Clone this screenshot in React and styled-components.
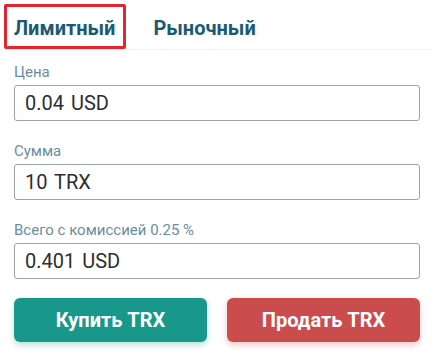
import React, { useState } from 'react';
import styled, { createGlobalStyle } from 'styled-components';

const GlobalStyle = createGlobalStyle`
  body {
    margin: 0;
    background: #fff;
    font-family: Roboto, "Liberation Sans", sans-serif;
  }
`;

const Panel = styled.div`
  width: 432px;
  height: 355px;
  box-sizing: border-box;
  overflow: hidden;
`;

const TabBar = styled.div`
  display: flex;
  align-items: stretch;
  height: 50px;
  padding: 4px 0 0 4px;
  box-sizing: border-box;
  border-bottom: 1px solid #eef1f3;
`;

const Tab = styled.button`
  display: flex;
  align-items: center;
  padding: 3px 8px 0 7px;
  margin-right: 17px;
  background: none;
  border: 3px solid ${(p) => (p.$active ? '#e3262d' : 'transparent')};
  border-radius: 2px;
  font-family: inherit;
  font-size: 20px;
  font-weight: 700;
  color: #1c5a72;
  cursor: pointer;
`;

const Form = styled.div`
  display: flex;
  flex-direction: column;
  gap: 21px;
  padding: 13px 12px 0 14px;
`;

const Field = styled.label`
  display: flex;
  flex-direction: column;
  gap: 4px;
`;

const Label = styled.span`
  font-size: 15px;
  line-height: 18px;
  color: #6b8e9b;
`;

const Input = styled.input`
  height: 36px;
  box-sizing: border-box;
  padding: 0 10px;
  border: 1px solid #9aa5a9;
  border-radius: 3px;
  font-family: inherit;
  font-size: 20px;
  word-spacing: 2px;
  color: #2e2e2e;
  outline: none;
`;

const Actions = styled.div`
  display: flex;
  gap: 20px;
  margin-top: -2px;
`;

const ActionButton = styled.button`
  flex: 1;
  height: 44px;
  border: none;
  border-radius: 6px;
  background: ${(p) => (p.$variant === 'sell' ? '#cb4c4c' : '#17988a')};
  box-shadow: 0 3px 6px ${(p) => (p.$variant === 'sell' ? 'rgba(203,76,76,0.3)' : 'rgba(23,152,138,0.3)')};
  color: #fff;
  font-family: inherit;
  font-size: 20px;
  font-weight: 700;
  cursor: pointer;
`;

const App = () => {
  const [tab, setTab] = useState('limit');
  const [price, setPrice] = useState('0.04 USD');
  const [amount, setAmount] = useState('10 TRX');
  const [total, setTotal] = useState('0.401 USD');

  return (
    <Panel>
      <GlobalStyle />
      <TabBar>
        <Tab $active={tab === 'limit'} onClick={() => setTab('limit')}>Лимитный</Tab>
        <Tab $active={tab === 'market'} onClick={() => setTab('market')}>Рыночный</Tab>
      </TabBar>
      <Form>
        <Field>
          <Label>Цена</Label>
          <Input value={price} onChange={(e) => setPrice(e.target.value)} />
        </Field>
        <Field>
          <Label>Сумма</Label>
          <Input value={amount} onChange={(e) => setAmount(e.target.value)} />
        </Field>
        <Field>
          <Label>Всего с комиссией 0.25 %</Label>
          <Input value={total} onChange={(e) => setTotal(e.target.value)} />
        </Field>
        <Actions>
          <ActionButton>Купить TRX</ActionButton>
          <ActionButton $variant="sell">Продать TRX</ActionButton>
        </Actions>
      </Form>
    </Panel>
  );
};

export default App;
